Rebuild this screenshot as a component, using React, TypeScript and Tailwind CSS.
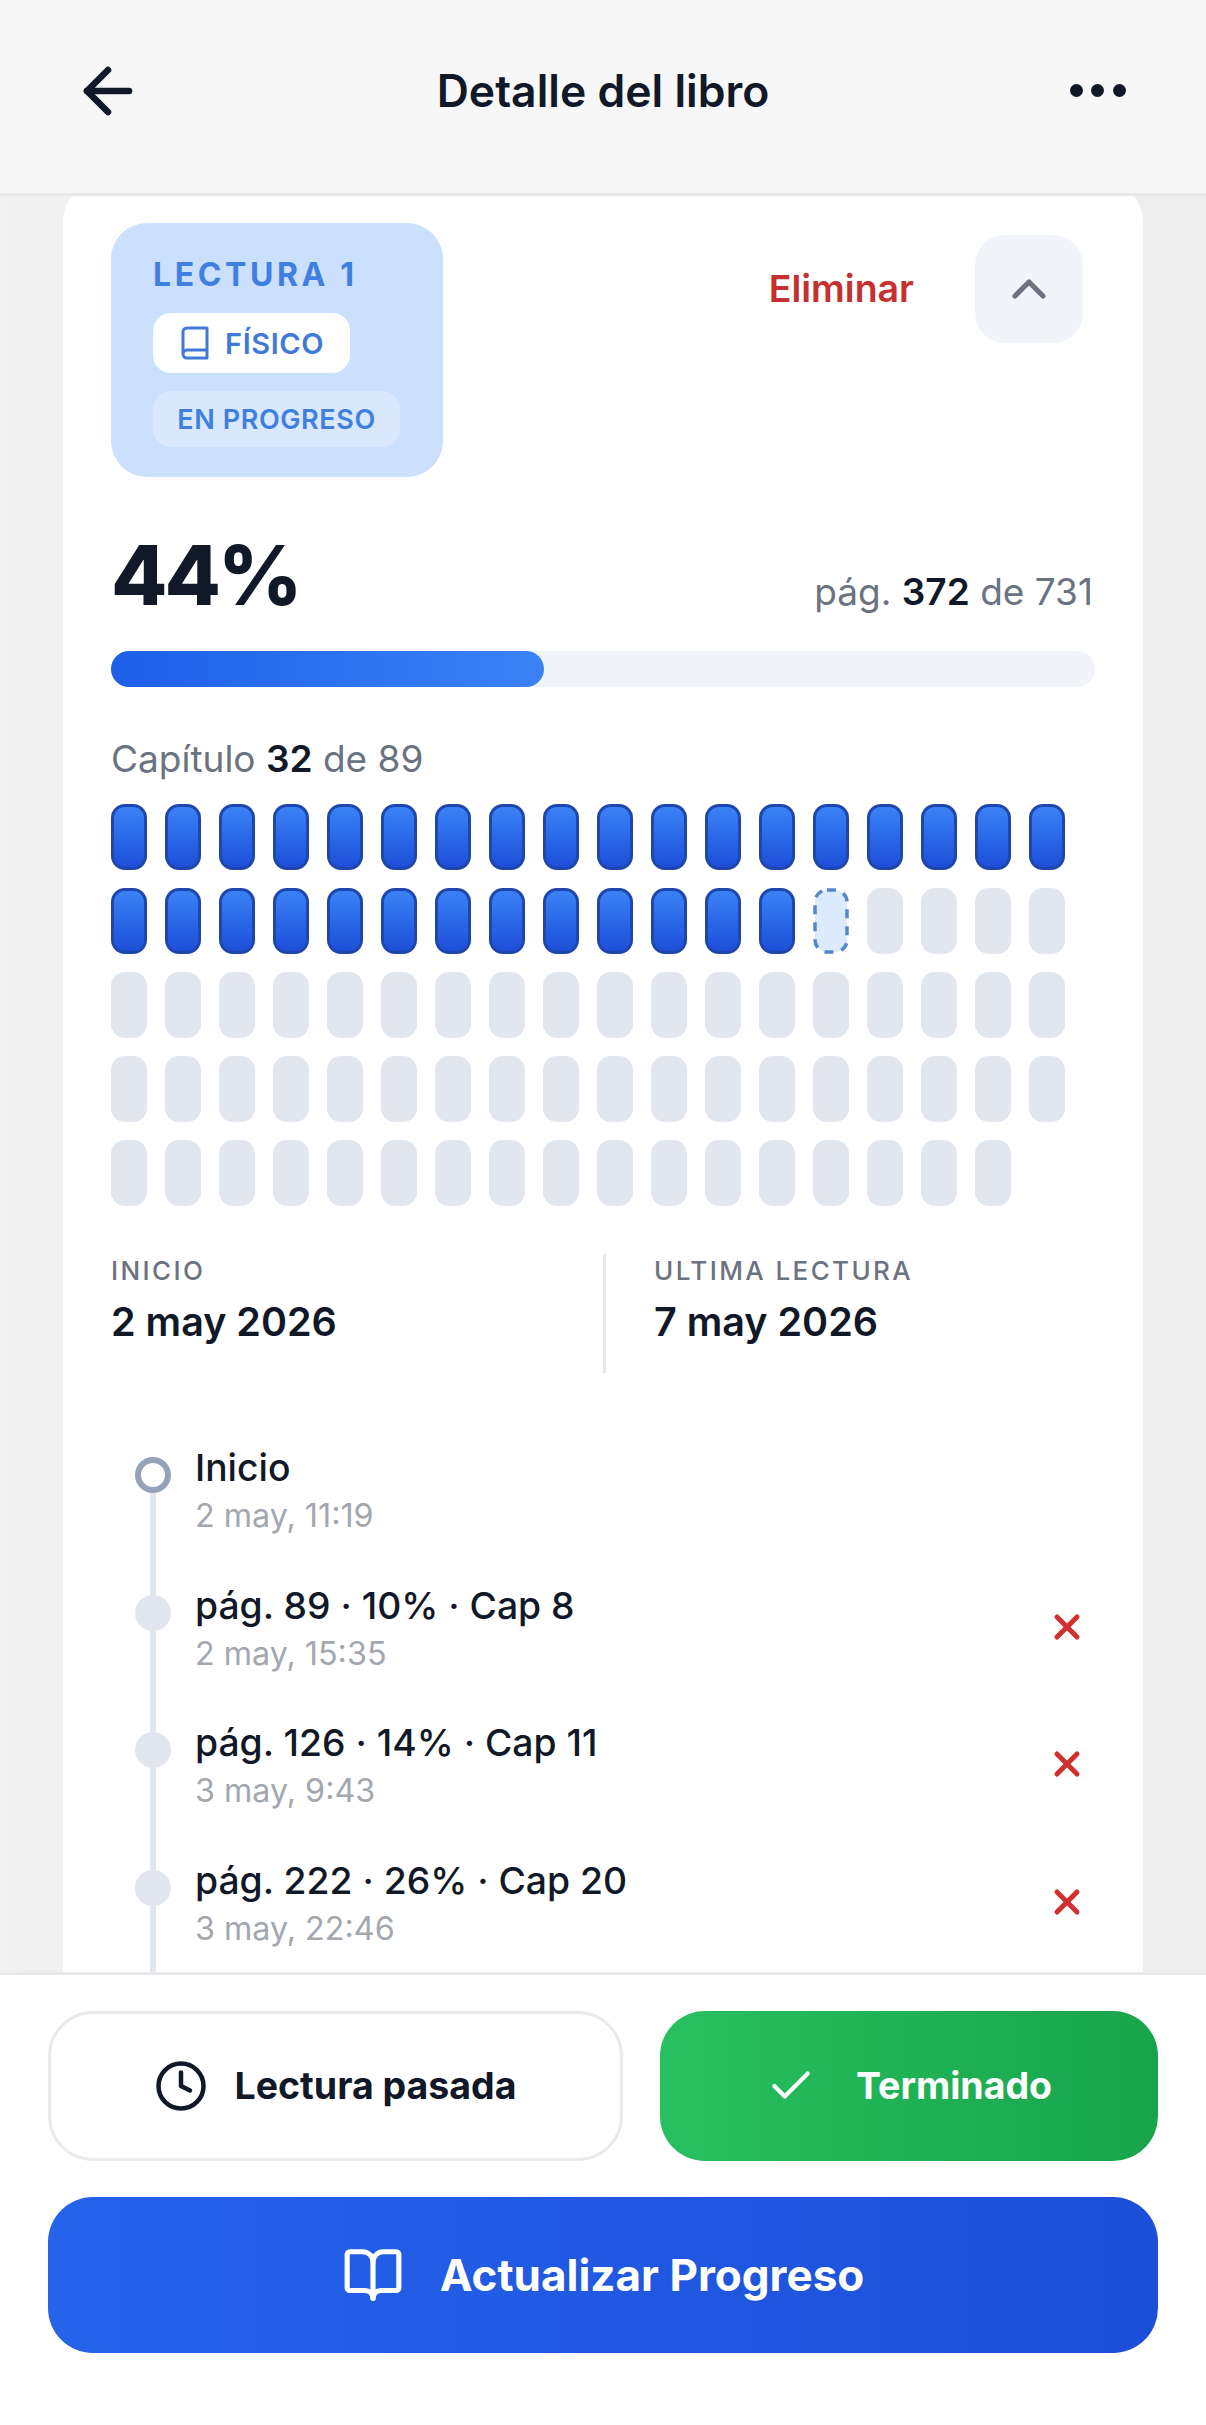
import React from "react";
import { ArrowLeft, BookOpen, Check, ChevronUp, Clock, X } from "lucide-react";

const rows = [
  { t: "Inicio", d: "2 may, 11:19", first: true },
  { t: "pág. 89 · 10% · Cap 8", d: "2 may, 15:35" },
  { t: "pág. 126 · 14% · Cap 11", d: "3 may, 9:43" },
  { t: "pág. 222 · 26% · Cap 20", d: "3 may, 22:46" },
];

function Chapter({ n }: { n: number }) {
  if (n < 32)
    return <div className="h-[66px] w-[36px] rounded-[14px] border-[3px] border-[#1e46ad] bg-gradient-to-b from-[#3b82f6] to-[#1d4ed8]" />;
  if (n === 32)
    return (
      <svg width="36" height="66" viewBox="0 0 36 66">
        <rect x="2" y="2" width="32" height="62" rx="12" fill="#dbeafe" stroke="#5587cc" strokeWidth="3.5" strokeDasharray="9 8" />
      </svg>
    );
  return <div className="h-[66px] w-[36px] rounded-[14px] bg-[#e2e6ee]" />;
}

export default function App() {
  return (
    <div className="flex h-[2425px] w-[1206px] flex-col overflow-hidden bg-white font-['Inter',sans-serif] text-[#111827]">
      <header className="flex h-[196px] shrink-0 items-center justify-between border-b-[3px] border-[#e8e8ea] bg-[#f7f7f8] pb-[12px] pl-[72px] pr-[80px]">
        <ArrowLeft size={72} strokeWidth={2.2} className="text-[#111827]" />
        <h1 className="ml-[-8px] text-[44.5px] font-semibold leading-[52px]">Detalle del libro</h1>
        <div className="flex w-[56px] justify-between">
          <span className="h-[13px] w-[13px] rounded-full bg-[#111827]" />
          <span className="h-[13px] w-[13px] rounded-full bg-[#111827]" />
          <span className="h-[13px] w-[13px] rounded-full bg-[#111827]" />
        </div>
      </header>

      <main className="flex-1 overflow-hidden bg-gradient-to-r from-[#f1f1f1] via-[#ececed] to-[#eeeeee] px-[63px]">
        <div className="mt-[-16px] rounded-[42px] bg-white pb-[120px] pl-[48px] pr-[48px] pt-[43px]">
          <div className="flex items-start justify-between">
            <div className="flex h-[254px] w-[332px] flex-col items-start rounded-[36px] bg-[#cbe0fc] pl-[42px] pt-[32px]">
              <div className="text-[32px] font-bold leading-[40px] tracking-[3.6px] text-[#3f7fe0]">LECTURA 1</div>
              <div className="mt-[18px] flex h-[60px] w-[197px] items-center gap-[16px] rounded-[18px] bg-white pl-[28px] text-[29px] font-semibold leading-none tracking-[0.6px] text-[#4079d8]">
                <svg width="28" height="34" viewBox="0 0 28 34" fill="none" stroke="currentColor" strokeWidth="3" strokeLinejoin="round">
                  <path d="M2 28V6a4 4 0 0 1 4-4h20v30H6a4 4 0 0 1-4-4a4 4 0 0 1 4-4h20" />
                </svg>
                FÍSICO
              </div>
              <div className="mt-[18px] flex h-[56px] w-[247px] items-center justify-center rounded-[18px] bg-[#d9e8fd] text-[27px] font-semibold leading-none tracking-[0.6px] text-[#3f7fe0]">
                EN PROGRESO
              </div>
            </div>
            <div className="mr-[12px] mt-[12px] flex items-center gap-[61px]">
              <span className="text-[37.5px] font-semibold leading-[44px] text-[#c53030]">Eliminar</span>
              <div className="flex h-[108px] w-[108px] items-center justify-center rounded-[30px] bg-[#f1f5f9]">
                <ChevronUp size={56} strokeWidth={2.2} className="text-[#6b7280]" />
              </div>
            </div>
          </div>

          <div className="mt-[49px] flex items-baseline justify-between">
            <div className="text-[82px] font-extrabold leading-[100px] tracking-[-3px] text-[#111827]">44%</div>
            <div className="mr-[2px] text-[37px] leading-[44px] text-[#6b7280]">
              pág. <span className="font-semibold text-[#111827]">372</span> de 731
            </div>
          </div>

          <div className="mt-[25px] h-[36px] w-full rounded-full bg-[#f1f5f9]">
            <div className="h-full w-[44%] rounded-full bg-gradient-to-r from-[#1d5fe8] to-[#3b82f6]" />
          </div>

          <div className="mt-[49px] text-[37px] leading-[46px] text-[#6b7280]">
            Capítulo <span className="font-semibold text-[#111827]">32</span> de 89
          </div>

          <div className="mt-[22px] flex w-[984px] flex-wrap gap-[18px]">
            {Array.from({ length: 89 }, (_, i) => (
              <Chapter key={i} n={i + 1} />
            ))}
          </div>

          <div className="mt-[48px] grid h-[119px] grid-cols-2">
            <div className="pt-[2px]">
              <div className="text-[26px] font-medium leading-[30px] tracking-[2.4px] text-[#6b7280]">INICIO</div>
              <div className="mt-[12px] text-[39.5px] font-semibold leading-[48px] text-[#111827]">2 may 2026</div>
            </div>
            <div className="border-l-[3px] border-[#e5e7eb] pl-[48px] pt-[2px]">
              <div className="text-[26px] font-medium leading-[30px] tracking-[2.4px] text-[#6b7280]">ULTIMA LECTURA</div>
              <div className="mt-[12px] text-[39.5px] font-semibold leading-[48px] text-[#111827]">7 may 2026</div>
            </div>
          </div>

          <div className="relative mt-[71px] pl-[24px]">
            <div className="absolute left-[39px] top-[20px] h-[560px] w-[6px] bg-[#e2e6ee]" />
            {rows.map((r) => (
              <div key={r.t} className="relative flex h-[137.5px] items-start">
                {r.first ? (
                  <div className="mt-[13px] h-[36px] w-[36px] shrink-0 rounded-full border-[6px] border-[#94a3b8] bg-white" />
                ) : (
                  <div className="mt-[13px] h-[36px] w-[36px] shrink-0 rounded-full bg-[#e2e6ee]" />
                )}
                <div className="ml-[24px] flex-1">
                  <div className="text-[37.3px] font-medium leading-[48px] text-[#111827]">{r.t}</div>
                  <div className="mt-[4px] text-[32.3px] leading-[40px] text-[#a3a7ae]">{r.d}</div>
                </div>
                {!r.first && <X size={40} strokeWidth={3} className="mr-[8px] mt-[25px] text-[#d0302f]" />}
              </div>
            ))}
          </div>
        </div>
      </main>

      <footer className="shrink-0 border-t-[3px] border-[#e8e8ea] bg-white px-[48px] pb-[72px] pt-[36px]">
        <div className="flex h-[150px] gap-[37px]">
          <button className="flex w-[575px] items-center justify-center gap-[26px] rounded-[45px] border-[3px] border-[#e8eaee] bg-white text-[37.5px] font-bold text-[#111827]">
            <Clock size={54} strokeWidth={2} />
            Lectura pasada
          </button>
          <button className="flex flex-1 items-center justify-center gap-[40px] rounded-[45px] bg-gradient-to-r from-[#27c060] to-[#18a44b] text-[37.5px] font-bold text-white">
            <Check size={50} strokeWidth={2} />
            Terminado
          </button>
        </div>
        <button className="mt-[36px] flex h-[156px] w-full items-center justify-center gap-[36px] rounded-[45px] bg-gradient-to-r from-[#2563eb] to-[#1d4ed8] text-[44px] font-bold text-white">
          <BookOpen size={62} strokeWidth={2} />
          Actualizar Progreso
        </button>
      </footer>
    </div>
  );
}
